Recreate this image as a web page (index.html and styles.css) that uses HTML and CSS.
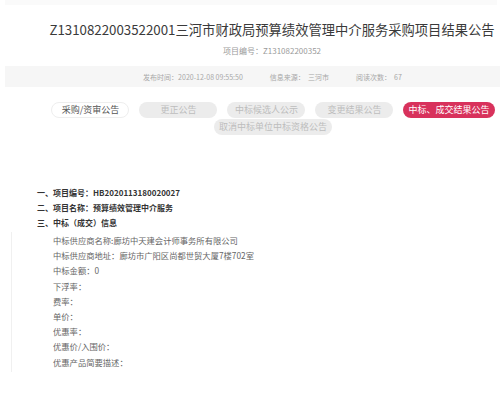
FILE: index.html
```html
<!DOCTYPE html>
<html lang="zh-CN">
<head>
    <meta charset="UTF-8">
    <meta name="viewport" content="width=device-width, initial-scale=1.0">
    <title>结果公告</title>
    <link rel="stylesheet" href="styles.css">
</head>
<body>
    <div class="top-strip"></div>

    <div class="header">
        <h1 class="title">Z1310822003522001三河市财政局预算绩效管理中介服务采购项目结果公告</h1>
        <p class="code">项目编号：Z131082200352</p>
    </div>

    <div class="meta">
        <span>发布时间：2020-12-08 09:55:50</span>
        <span>信息来源：&nbsp; 三河市</span>
        <span>阅读次数：&nbsp; 67</span>
    </div>

    <div class="tabs">
        <span class="tab plain">采购/资审公告</span>
        <span class="tab">更正公告</span>
        <span class="tab">中标候选人公示</span>
        <span class="tab">变更结果公告</span>
        <span class="tab active">中标、成交结果公告</span>
        <span class="tab">取消中标单位中标资格公告</span>
    </div>

    <div class="content">
        <p class="head">一、项目编号：HB2020113180020027</p>
        <p class="head">二、项目名称：预算绩效管理中介服务</p>
        <p class="head">三、中标（成交）信息</p>
        <div class="detail">
            <p>中标供应商名称:廊坊中天建会计师事务所有限公司</p>
            <p>中标供应商地址：廊坊市广阳区尚都世贸大厦7楼702室</p>
            <p>中标金额：0</p>
            <p>下浮率：</p>
            <p>费率：</p>
            <p>单价：</p>
            <p>优惠率：</p>
            <p>优惠价/入围价：</p>
            <p>优惠产品简要描述：</p>
        </div>
    </div>
</body>
</html>
```

FILE: styles.css
```css
body { margin: 0; background: #fff; font-family: "Noto Sans CJK SC", "Noto Sans", sans-serif; color: #333; }
p { margin: 0; }

.top-strip { height: 5px; margin: 0 5px; background: #fafafa; }

.header { padding: 14px 0 0 42px; text-align: center; }
.title { margin: 0; font-size: 13.3px; font-weight: normal; color: #3a3a3a; line-height: 22px; white-space: nowrap; }
.code { margin-top: 4px; font-size: 8px; line-height: 12px; color: #9a9a9a; }

.meta { display: flex; justify-content: center; gap: 27px; margin: 9px 2px 0 5px; padding-left: 40px; height: 21px; align-items: center; background: #f6f6f6; font-size: 7px; color: #a8a8a8; }

.tabs { display: flex; flex-wrap: wrap; justify-content: center; gap: 1px 10px; padding-left: 44px; margin-top: 15px; }
.tab { min-width: 78px; height: 16px; padding: 0 5px; box-sizing: border-box; border-radius: 8px; background: #ececec; color: #bdbdbd; font-size: 9px; line-height: 16px; text-align: center; white-space: nowrap; }
.tab.plain { background: #fff; border: 1px solid #eee; color: #555; line-height: 14px; }
.tab.active { background: #d8325c; color: #fff; }

.content { margin-top: 50px; padding-left: 11px; font-size: 8px; }
.head { padding-left: 26px; line-height: 15px; font-weight: bold; color: #333; }
.detail { border-left: 1px solid #f0f0f0; margin-top: 2px; padding: 1px 0 2px 41px; }
.detail p { font-size: 8.3px; line-height: 15.2px; color: #666; }
```
